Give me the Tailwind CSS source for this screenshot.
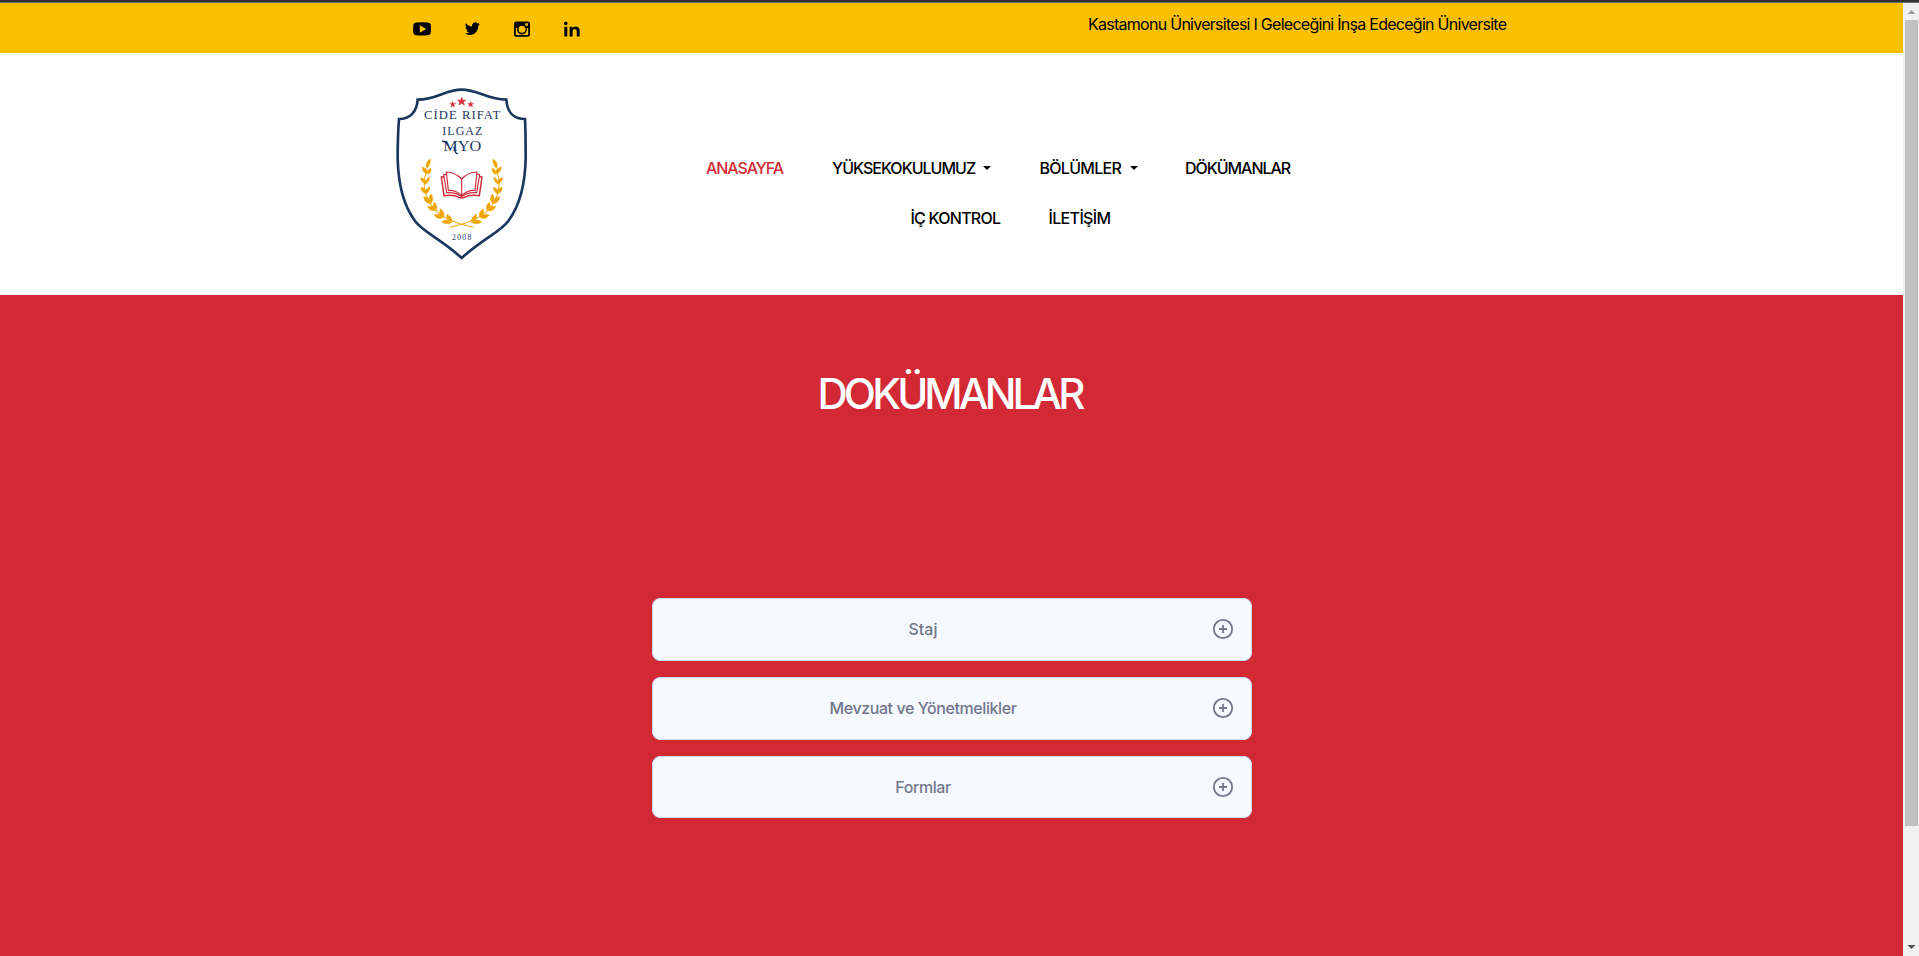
<!DOCTYPE html>
<html lang="tr">
<head>
<meta charset="utf-8">
<meta name="viewport" content="width=device-width, initial-scale=1">
<title>Dokümanlar</title>
<script src="https://cdn.jsdelivr.net/npm/@tailwindcss/browser@4"></script>
</head>
<body class="flex h-[956px] flex-col overflow-hidden bg-white font-['Inter',sans-serif] text-base text-black">
<div class="h-[3px] shrink-0 border-b border-[#6b6b6b] bg-[#333]"></div>
<div class="flex min-h-0 flex-1">
  <main class="flex min-w-0 flex-1 flex-col">
    <!-- Top bar -->
    <div class="flex h-[50px] shrink-0 justify-between bg-[#fbc100] pr-[395px] pl-[412.5px]">
      <div class="flex items-center gap-8 pt-px">
        <a class="block size-[18px]"><svg viewBox="0 0 18 18" class="size-[18px]"><path fill-rule="evenodd" d="M3.5 2.6Q9 2 14.500 2.600Q17.600 2.800 17.800 5.500Q18.200 9 17.800 12.400Q17.500 15 14.500 15.300Q9 15.800 3.500 15.300Q.6 15 .3 12.400Q-.1 9 .3 5.500Q.5 2.800 3.500 2.600ZM6.800 5.200V12.700L13.200 9Z"/></svg></a>
        <a class="block size-[18px]"><svg viewBox="0 0 24 24" class="size-[18px]"><path d="M22.500 5.400c-.8.300-1.600.6-2.400.7.900-.5 1.500-1.300 1.800-2.300-.8.500-1.700.8-2.600 1A4.100 4.100 0 0 0 12.200 8.600C8.800 8.400 5.800 6.800 3.800 4.300c-1.100 1.900-.5 4.300 1.300 5.500-.7 0-1.300-.2-1.900-.5v.1c0 2 1.400 3.600 3.300 4-.6.200-1.200.2-1.900.1.500 1.600 2 2.800 3.900 2.900A8.300 8.300 0 0 1 2.400 18c1.800 1.200 4 1.900 6.300 1.900 7.700 0 12-6.500 11.700-12.300.8-.6 1.500-1.300 2.100-2.200Z"/></svg></a>
        <a class="block size-[18px]"><svg viewBox="0 0 18 18" class="size-[18px]"><path fill-rule="evenodd" d="M3 1.500H15Q17 1.500 17 3.500V14.700Q17 16.700 15 16.700H3Q1 16.700 1 14.700V3.500Q1 1.500 3 1.500ZM12.300 3.200V5.800H15V3.200ZM2.800 8V14.900H15.200V8H13.700A5 5 0 1 1 4.200 8ZM9 5.800A3.500 3.500 0 1 0 9 12.800A3.500 3.500 0 1 0 9 5.800Z"/></svg></a>
        <a class="block size-[18px]"><svg viewBox="0 0 18 18" class="size-[18px]"><path d="M1.300 6.800H4.300V16.500H1.300ZM6.600 6.800H9.400V8.100Q10.300 6.500 12.500 6.500Q16.700 6.500 16.700 11V16.500H13.700V11.600Q13.700 9.100 11.800 9.100Q9.600 9.100 9.600 11.600V16.500H6.600Z"/><circle cx="2.800" cy="3.400" r="1.800"/></svg></a>
      </div>
      <div class="w-[420px] pt-[9px] leading-6 tracking-[-0.73px] whitespace-nowrap">Kastamonu Üniversitesi I Geleceğini İnşa Edeceğin Üniversite</div>
    </div>

    <!-- Header -->
    <header class="flex h-[242px] shrink-0 pl-[380px]">
      <svg class="mt-[22px] h-[185px] w-40" viewBox="0 0 480 555">
        <defs>
          <g id="branch" fill="#efa500" stroke="#efa500" stroke-width="1.500">
            <path fill="none" stroke-width="3" d="M141 285Q119 335 152 388Q180 436 280 457"/>
            <path d="M151 252Q132 264 141 280Q153 268 151 252ZM126 276Q127 294 145 297Q144 280 126 276ZM153 280Q156 294 143 298Q139 285 153 280Z"/>
            <path d="M122 308Q123 322 138 327Q138 310 122 308ZM149 306Q148 322 136 327Q135 312 149 306Z"/>
            <path d="M123 337Q123 352 139 357Q140 340 123 337ZM149 336Q150 350 138 356Q133 343 149 336Z"/>
            <path d="M131 365Q133 385 153 386Q149 367 131 365ZM153 357Q164 372 153 385Q142 370 153 357Z"/>
            <path d="M143 394Q150 412 170 406Q161 391 143 394ZM162 382Q175 392 169 407Q154 398 162 382Z"/>
            <path d="M162 420Q174 436 190 427Q179 413 162 420ZM181 401Q197 413 190 428Q174 417 181 401Z"/>
            <path d="M185 440Q200 452 216 442Q202 429 185 440ZM201 418Q219 427 215 443Q197 434 201 418Z"/>
          </g>
        </defs>
        <path d="M245 44C195 44 170 74 113 74C111 110 90 132 57 132C54 170 53 210 53 250C55 345 78 402 105 438C130 472 180 490 245 549C310 490 360 472 385 438C412 402 435 345 437 250C437 210 437 170 435 132C400 132 381 110 379 74C320 74 295 44 245 44Z" fill="#fff" stroke="#1b365f" stroke-width="8"/>
        <g fill="#d12c3b" stroke="#d12c3b">
          <path d="M245 67l3 8.500h9l-7 5.500 3 9-8-5.500-8 5.500 3-9-7-5.500h9Z" stroke-width="2"/>
          <path d="M218 79l2.200 6.200h6.800l-5.400 4.200 2.100 6.600-5.700-4-5.700 4 2.100-6.600-5.400-4.200h6.800Z"/>
          <path d="M272 79l2.200 6.200h6.800l-5.400 4.200 2.100 6.600-5.700-4-5.700 4 2.100-6.600-5.400-4.200h6.800Z"/>
        </g>
        <g fill="#1b365f" font-family="Liberation Serif, serif">
          <text x="132" y="131" font-size="38" textLength="229">CİDE RIFAT</text>
          <text x="187" y="180" font-size="36" textLength="120">ILGAZ</text>
          <text x="190" y="229" font-size="45" textLength="114" lengthAdjust="spacingAndGlyphs">MYO</text>
          <text x="216" y="496" font-size="23" textLength="58">2008</text>
        </g>
        <path d="M186 199Q196 197 203 210M222 215Q224 237 234 236" fill="none" stroke="#1b365f" stroke-width="4"/>
        <use href="#branch"/>
        <use href="#branch" transform="matrix(-1 0 0 1 490 0)"/>
        <g fill="none" stroke="#d12c3b" stroke-width="3.500" stroke-linejoin="round">
          <path d="M245 312Q226 292 199 291L205 346Q230 345 245 363Q260 345 285 346L291 291Q264 292 245 312V363"/>
          <path d="M198 298L191 299L200 353Q229 351 245 365Q261 351 290 353L299 299L292 298"/>
          <path d="M192 305L184 306L192 362Q222 358 239 368H251Q268 358 298 362L306 306L298 305" stroke-width="4.500"/>
        </g>
      </svg>
      <nav class="mt-[103px] ml-[166px] flex w-[620px] flex-col leading-6 font-medium">
        <div class="flex h-[50px]">
          <a class="w-[126px] tracking-[-1.08px] whitespace-nowrap text-[#d22934]">ANASAYFA</a>
          <a class="flex w-[207.5px] tracking-[-0.98px] whitespace-nowrap"><span class="w-[151px]">YÜKSEKOKULUMUZ</span><span class="mt-[10px] h-0 w-0 border-x-4 border-t-4 border-x-transparent border-t-black"></span></a>
          <a class="flex w-[145.5px] tracking-[-0.72px] whitespace-nowrap"><span class="w-[90px]">BÖLÜMLER</span><span class="mt-[10px] h-0 w-0 border-x-4 border-t-4 border-x-transparent border-t-black"></span></a>
          <a class="tracking-[-1.03px] whitespace-nowrap">DÖKÜMANLAR</a>
        </div>
        <div class="flex pl-[204.5px]">
          <a class="w-[138px] tracking-[-0.75px] whitespace-nowrap">İÇ KONTROL</a>
          <a class="tracking-[-0.65px] whitespace-nowrap">İLETİŞİM</a>
        </div>
      </nav>
    </header>

    <!-- Documents -->
    <section class="flex flex-1 flex-col items-center bg-[#d22934]">
      <h1 class="mt-[69px] h-[60px] pr-1 text-[42px] leading-[60px] font-medium tracking-[-3.9px] text-white">DOKÜMANLAR</h1>
      <div class="mt-[174px] flex w-[600px] flex-col gap-4 font-medium text-[#73778c]">
        <div class="flex h-[63px] items-center rounded-lg border border-[#c5dcfa] bg-[#f6f9ff] pr-[17px] pb-px pl-[15px]">
          <span class="flex-1 pr-[33px] text-center">Staj</span>
          <svg viewBox="0 0 22 22" class="size-[22px]" fill="none" stroke="currentColor" stroke-width="1.800"><circle cx="11" cy="11" r="9.200"/><path d="M11 7v8M7 11h8"/></svg>
        </div>
        <div class="flex h-[63px] items-center rounded-lg border border-[#c5dcfa] bg-[#f6f9ff] pr-[17px] pb-px pl-[15px]">
          <span class="flex-1 pr-[33px] text-center tracking-[-0.42px]">Mevzuat ve Yönetmelikler</span>
          <svg viewBox="0 0 22 22" class="size-[22px]" fill="none" stroke="currentColor" stroke-width="1.800"><circle cx="11" cy="11" r="9.200"/><path d="M11 7v8M7 11h8"/></svg>
        </div>
        <div class="flex h-[62px] items-center rounded-lg border border-[#c5dcfa] bg-[#f6f9ff] pr-[17px] pl-[15px]">
          <span class="flex-1 pr-[33px] text-center tracking-[-0.42px]">Formlar</span>
          <svg viewBox="0 0 22 22" class="size-[22px]" fill="none" stroke="currentColor" stroke-width="1.800"><circle cx="11" cy="11" r="9.200"/><path d="M11 7v8M7 11h8"/></svg>
        </div>
      </div>
    </section>
  </main>

  <!-- Scrollbar -->
  <aside class="flex w-4 shrink-0 flex-col items-center bg-[#f1f1f1]">
    <svg viewBox="0 0 16 17" class="h-[17px] w-4 shrink-0"><path d="M4.500 11L8.500 7L12.500 11Z" fill="#a3a3a3"/></svg>
    <div class="h-[806px] w-[13px] bg-[#c1c1c1]"></div>
    <svg viewBox="0 0 16 17" class="mt-auto h-[17px] w-4 shrink-0"><path d="M4.500 6L8.500 10L12.500 6Z" fill="#505050"/></svg>
  </aside>
</div>
</body>
</html>
